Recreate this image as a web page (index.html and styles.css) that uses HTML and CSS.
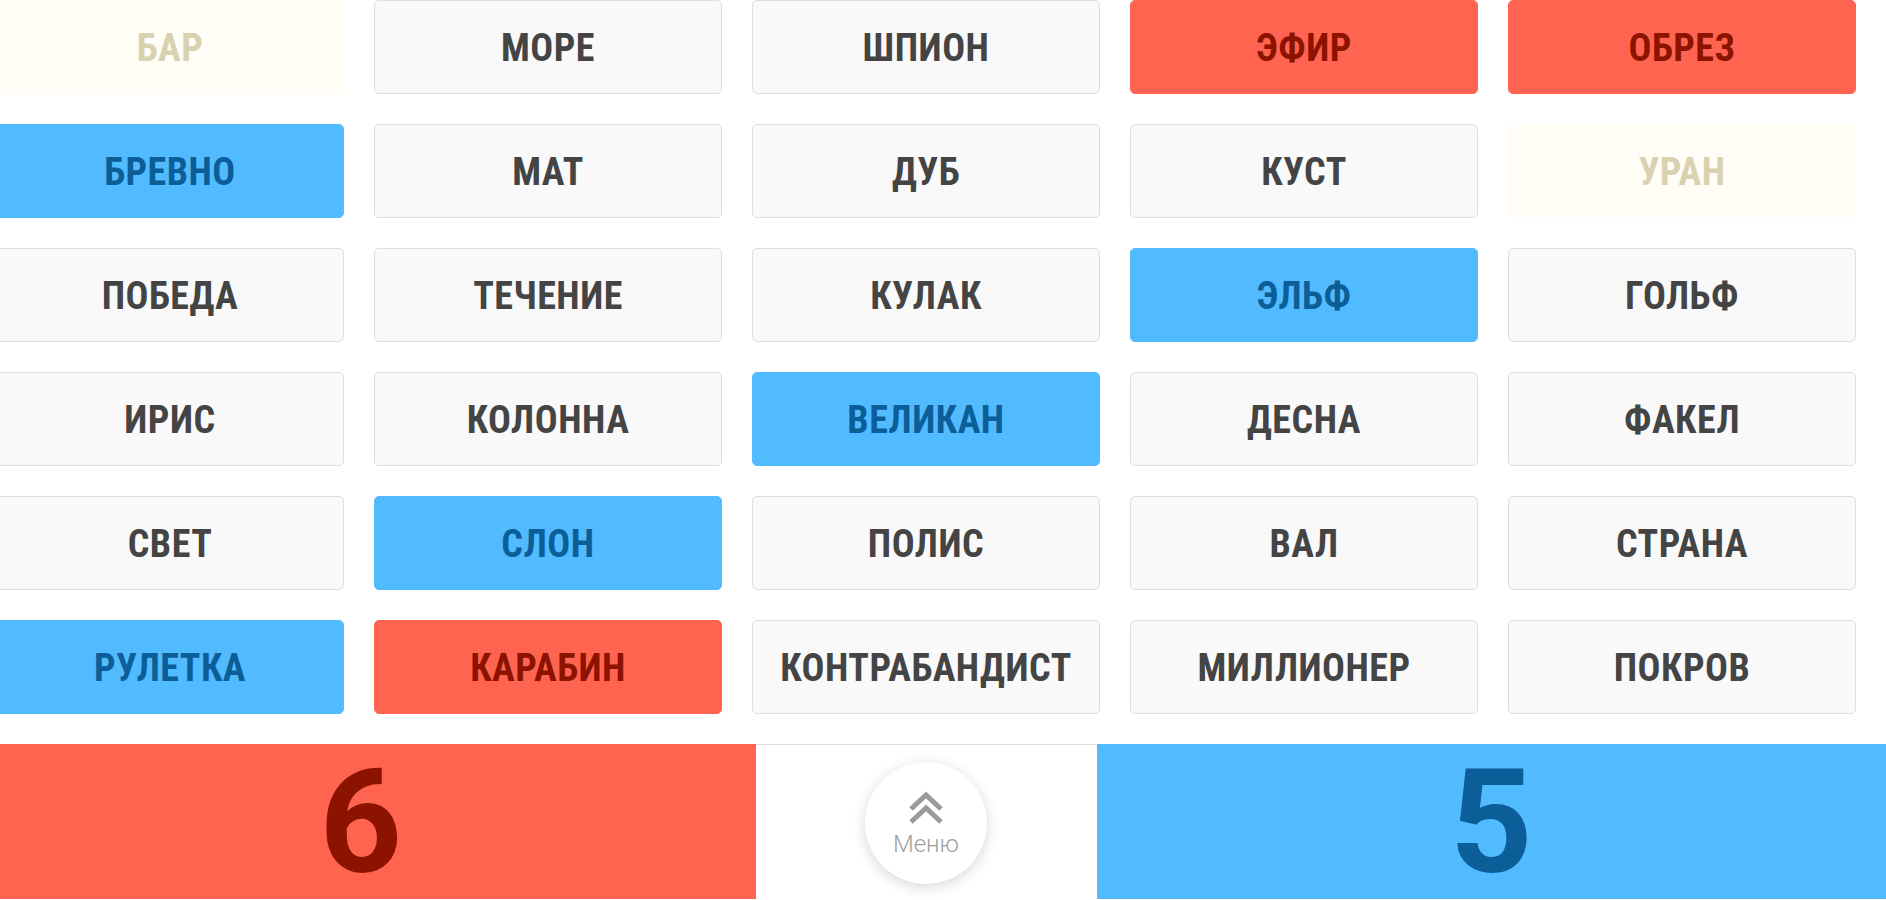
FILE: index.html
```html
<!DOCTYPE html>
<html lang="ru">
<head>
    <meta charset="UTF-8">
    <meta name="viewport" content="width=device-width, initial-scale=1.0">
    <title>Кодовые имена</title>
    <link rel="stylesheet" href="styles.css">
</head>
<body>
    <div class="page">
        <div class="board">
            <div class="card card-neutral">Бар</div>
            <div class="card">Море</div>
            <div class="card">Шпион</div>
            <div class="card card-red">Эфир</div>
            <div class="card card-red">Обрез</div>

            <div class="card card-blue">Бревно</div>
            <div class="card">Мат</div>
            <div class="card">Дуб</div>
            <div class="card">Куст</div>
            <div class="card card-neutral">Уран</div>

            <div class="card">Победа</div>
            <div class="card">Течение</div>
            <div class="card">Кулак</div>
            <div class="card card-blue">Эльф</div>
            <div class="card">Гольф</div>

            <div class="card">Ирис</div>
            <div class="card">Колонна</div>
            <div class="card card-blue">Великан</div>
            <div class="card">Десна</div>
            <div class="card">Факел</div>

            <div class="card">Свет</div>
            <div class="card card-blue">Слон</div>
            <div class="card">Полис</div>
            <div class="card">Вал</div>
            <div class="card">Страна</div>

            <div class="card card-blue">Рулетка</div>
            <div class="card card-red">Карабин</div>
            <div class="card">Контрабандист</div>
            <div class="card">Миллионер</div>
            <div class="card">Покров</div>
        </div>

        <div class="score-bar">
            <div class="score score-red">6</div>
            <div class="menu-wrap">
                <button class="menu-btn">
                    <svg class="menu-icon" width="34" height="34" viewBox="0 0 34 34">
                        <polyline points="2,18 17,4 32,18"/>
                        <polyline points="2,31 17,17 32,31"/>
                    </svg>
                    <span class="menu-label">Меню</span>
                </button>
            </div>
            <div class="score score-blue">5</div>
        </div>
    </div>
</body>
</html>
```

FILE: styles.css
```css
html, body {
    margin: 0;
    padding: 0;
    overflow: hidden;
}

body {
    font-family: "Roboto Condensed", Roboto, "DejaVu Sans", sans-serif;
    background-color: white;
}

.page {
    width: 1920px;
    margin-left: -34px;
}

.board {
    display: grid;
    grid-template-columns: repeat(5, 1fr);
    gap: 30px;
    padding: 0 30px 30px;
}

.card {
    height: 94px;
    box-sizing: border-box;
    padding-top: 1px;
    display: flex;
    align-items: center;
    justify-content: center;
    background-color: #f9f9f9;
    border: 1px solid #dddddd;
    border-radius: 5px;
    color: #444444;
    font-size: 38px;
    font-weight: 700;
    font-stretch: condensed;
    letter-spacing: 0.5px;
    text-transform: uppercase;
}

.card-red {
    background-color: #ff6450;
    border-color: #ff6450;
    color: #8c1300;
}

.card-blue {
    background-color: #52bbff;
    border-color: #52bbff;
    color: #0b5e97;
}

.card-neutral {
    background-color: #fffdf5;
    border-color: #fffdf5;
    color: #d9d1af;
}

.score-bar {
    display: flex;
    height: 155px;
}

.score {
    flex: 1;
    box-sizing: border-box;
    padding-top: 3px;
    display: flex;
    align-items: center;
    justify-content: center;
    font-family: Roboto, sans-serif;
    font-size: 144px;
    font-weight: 700;
    line-height: 1;
}

.score-red {
    background-color: #ff6450;
    color: #8c1300;
}

.score-blue {
    background-color: #52bbff;
    color: #0b5e97;
}

.menu-wrap {
    width: 341px;
    box-sizing: border-box;
    padding-top: 2px;
    border-top: 1px solid #dddddd;
    display: flex;
    align-items: center;
    justify-content: center;
}

.menu-btn {
    width: 122px;
    height: 122px;
    padding: 0;
    border: none;
    border-radius: 50%;
    background-color: white;
    box-shadow: 0 3px 14px rgba(0, 0, 0, 0.16);
    display: flex;
    flex-direction: column;
    align-items: center;
    justify-content: center;
    cursor: pointer;
}

.menu-icon {
    fill: none;
    stroke: #9b9b9b;
    stroke-width: 5;
}

.menu-label {
    margin-top: 7px;
    font-family: Roboto, sans-serif;
    font-size: 24px;
    font-weight: 300;
    line-height: 1;
    color: #a0a0a0;
}
```
